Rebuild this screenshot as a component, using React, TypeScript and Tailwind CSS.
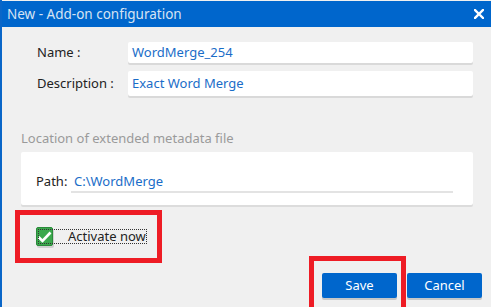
export default function App() {
  return (
    <div className="w-[491px] h-[307px] overflow-hidden bg-[#f0f0f0] border-l-2 border-[#0a66c8] font-['Noto_Sans',sans-serif] text-[13px] text-[#222]">
      {/* title bar */}
      <div className="mt-px h-[26px] bg-[#0066cc] flex items-center justify-between pl-[5px] pr-[7px]">
        <span className="text-[#d6e3f3] text-[13.5px]">New - Add-on configuration</span>
        <svg width="10" height="10" viewBox="0 0 10 10">
          <path d="M1 1 L9 9 M9 1 L1 9" stroke="#fff" strokeWidth="2.4" strokeLinecap="square" />
        </svg>
      </div>

      {/* name / description */}
      <div className="pt-[15px] pl-[35px] pr-[18px] flex flex-col gap-[8px]">
        <div className="flex items-center">
          <span className="w-[91px]">Name :</span>
          <div className="flex-1 h-[21px] bg-white rounded-[2px] shadow-[0_2px_0_#d9d9d9] flex items-center pl-[4px] text-[#1a6dc8]">
            WordMerge_254
          </div>
        </div>
        <div className="flex items-center">
          <span className="w-[91px]">Description :</span>
          <div className="flex-1 h-[25px] bg-white rounded-[2px] shadow-[0_2px_0_#d9d9d9] flex items-center pl-[4px] text-[#1a6dc8]">
            Exact Word Merge
          </div>
        </div>
      </div>

      {/* location */}
      <div className="mt-[33px] pl-[19px] pr-[18px]">
        <div className="text-[#9a9a9a] leading-[18px]">Location of extended metadata file</div>
        <div className="mt-[5px] h-[53px] bg-white rounded-[2px] shadow-[0_2px_0_#dcdcdc] pl-[15px] pr-[20px] pt-[19px]">
          <div className="flex items-center">
            <span className="w-[35px]">Path:</span>
            <div className="flex-1 h-[22px] border-b-2 border-[#e3e3e3] pl-[3px] text-[#1a6dc8] leading-[20px]">
              C:\WordMerge
            </div>
          </div>
        </div>
      </div>

      {/* activate */}
      <div className="mt-[5px] ml-[13px] w-[147px] h-[53px] border-[5px] border-[#ee1c25] flex items-center pl-[16px]">
        <div className="relative flex items-center">
          <div className="w-[17px] h-[19px] rounded-[2px] bg-[#3aa84c] border border-[#2a8a3a] flex items-center justify-center shadow-[1px_2px_0_#d0d0d0]">
            <svg width="15" height="12" viewBox="0 0 15 12">
              <path d="M1.5 6 L5.5 10 L13.5 1.5" stroke="#fff" strokeWidth="2.6" fill="none" />
            </svg>
          </div>
          <span className="ml-[15px] leading-[15px]">Activate now</span>
          <div className="absolute left-[2px] -right-[1px] top-[2px] bottom-[2px] border border-dotted border-[#333]" />
        </div>
      </div>

      {/* buttons */}
      <div className="-mt-[7px] flex justify-end pr-[9px] gap-[10px]">
        <div className="w-[97px] h-[58px] border-[5px] border-[#ee1c25] flex items-start justify-end pt-[12px] pr-[4px] -mr-[9px]">
          <button className="w-[75px] h-[25px] bg-[#0066cc] rounded-[2px] text-white shadow-[0_2px_0_#c8c8c8]">Save</button>
        </div>
        <div className="pt-[17px]">
          <button className="w-[75px] h-[25px] bg-[#0066cc] rounded-[2px] text-white shadow-[0_2px_0_#c8c8c8]">Cancel</button>
        </div>
      </div>
    </div>
  );
}
